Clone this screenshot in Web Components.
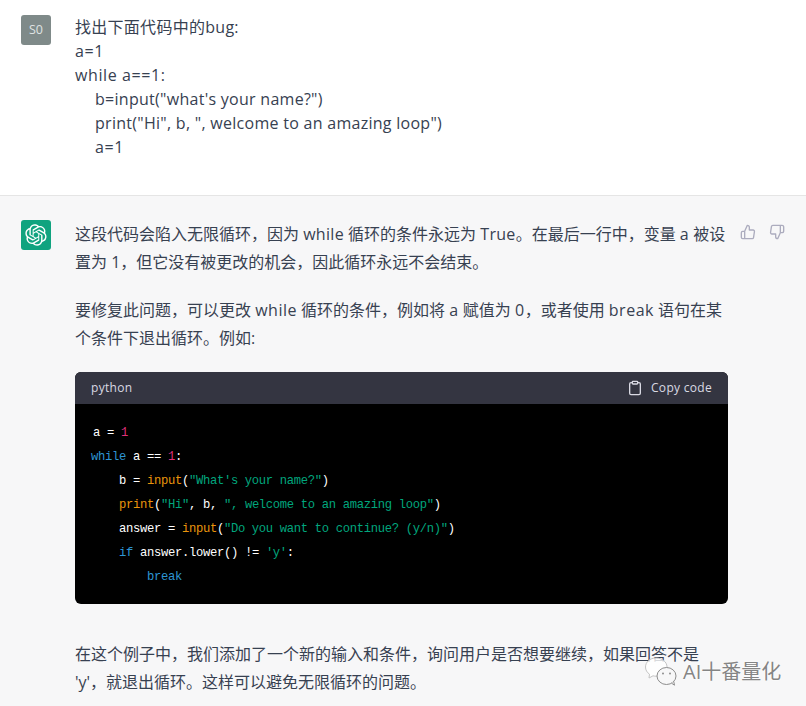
<!DOCTYPE html>
<html lang="zh-CN">
<head>
<meta charset="utf-8">
<title>chat</title>
<style>
  html, body { margin: 0; height: 100%; }
  body {
    position: relative;
    overflow: hidden;
    background: #f7f7f8;
    color: #374151;
    font: 16px/28px "Open Sans", "Noto Sans CJK SC", sans-serif;
  }
  p { margin: 0; white-space: nowrap; }
  .user-line { line-height: 24px; letter-spacing: .28px; }
  .user-line.eq { letter-spacing: .6px; }
  .indent { padding-left: 20px; }
  .l3 { letter-spacing: .3px; }
  .l5 { letter-spacing: .5px; }
  .ln { white-space: pre; height: 24px; }
  .tk-kw { color: #2e95d3; }
  .tk-num { color: #df3079; }
  .tk-str { color: #00a67d; }
  .tk-fn { color: #e9950c; }
</style>
</head>
<body>
<chat-message role="user" avatar="S0">
  <div class="user-line">找出下面代码中的bug:</div>
  <div class="user-line eq">a=1</div>
  <div class="user-line eq">while a==1:</div>
  <div class="user-line indent">b=input("what's your name?")</div>
  <div class="user-line indent">print("Hi", b, ", welcome to an amazing loop")</div>
  <div class="user-line indent eq">a=1</div>
</chat-message>
<chat-message role="assistant">
  <p class="l-wrap">这段代码会陷入无限循环，因为 <span class="l3">while</span> 循环的条件永远为 <span class="l3">True</span>。在最后一行中，变量 <span class="l3">a</span> 被设<br>置为 1，但它没有被更改的机会，因此循环永远不会结束。</p>
  <p style="margin-top:20px">要修复此问题，可以更改 <span class="l5">while</span> 循环的条件，例如将 <span class="l5">a</span> 赋值为 <span class="l5">0</span>，或者使用 <span class="l5">break</span> 语句在某<br>个条件下退出循环。例如:</p>
  <code-block language="python" style="margin-top:20px">
    <div class="ln" style="padding-left:2px">a = <span class="tk-num">1</span></div>
    <div class="ln"><span class="tk-kw">while</span> a == <span class="tk-num">1</span>:</div>
    <div class="ln">    b = <span class="tk-fn">input</span>(<span class="tk-str">"What's your name?"</span>)</div>
    <div class="ln">    <span class="tk-fn">print</span>(<span class="tk-str">"Hi"</span>, b, <span class="tk-str">", welcome to an amazing loop"</span>)</div>
    <div class="ln">    answer = <span class="tk-fn">input</span>(<span class="tk-str">"Do you want to continue? (y/n)"</span>)</div>
    <div class="ln">    <span class="tk-kw">if</span> answer.lower() != <span class="tk-str">'y'</span>:</div>
    <div class="ln">        <span class="tk-kw">break</span></div>
  </code-block>
  <p style="margin-top:36px">在这个例子中，我们添加了一个新的输入和条件，询问用户是否想要继续，如果回答不是<br>'y'，就退出循环。这样可以避免无限循环的问题。</p>
</chat-message>
<wechat-mark>AI十番量化</wechat-mark>

<script>
const OPENAI_PATH = "M37.5324 16.8707C37.9808 15.5241 38.1363 14.0974 37.9886 12.6859C37.8409 11.2744 37.3934 9.91076 36.676 8.68622C35.6126 6.83404 33.9882 5.3676 32.0373 4.4985C30.0864 3.62941 27.9098 3.40259 25.8215 3.85078C24.8796 2.7893 23.7219 1.94125 22.4257 1.36341C21.1295 0.785575 19.7249 0.491269 18.3058 0.500197C16.1708 0.495044 14.0893 1.16803 12.3614 2.42214C10.6335 3.67624 9.34853 5.44666 8.6917 7.47815C7.30085 7.76286 5.98686 8.3414 4.8377 9.17505C3.68854 10.0087 2.73073 11.0782 2.02839 12.312C0.956464 14.1591 0.498905 16.2988 0.721698 18.4228C0.944492 20.5467 1.83612 22.5449 3.268 24.1293C2.81966 25.4759 2.66413 26.9026 2.81182 28.3141C2.95951 29.7256 3.40701 31.0892 4.12437 32.3138C5.18791 34.1659 6.8123 35.6322 8.76321 36.5013C10.7141 37.3704 12.8907 37.5973 14.9789 37.1492C15.9208 38.2107 17.0786 39.0587 18.3747 39.6366C19.6709 40.2144 21.0755 40.5087 22.4946 40.4998C24.6307 40.5054 26.7133 39.8321 28.4418 38.5772C30.1704 37.3223 31.4556 35.5506 32.1119 33.5179C33.5027 33.2332 34.8167 32.6547 35.9659 31.821C37.115 30.9874 38.0728 29.9178 38.7752 28.684C39.8458 26.8371 40.3023 24.6979 40.0789 22.5748C39.8556 20.4517 38.9639 18.4544 37.5324 16.8707ZM22.4978 37.8849C20.7443 37.8874 19.0459 37.2733 17.6994 36.1501C17.7601 36.117 17.8666 36.0586 17.936 36.0161L25.9004 31.4156C26.1003 31.3019 26.2663 31.137 26.3813 30.9378C26.4964 30.7386 26.5563 30.5124 26.5549 30.2825V19.0542L29.9213 20.998C29.9389 21.0068 29.9541 21.0198 29.9656 21.0359C29.977 21.052 29.9842 21.0707 29.9867 21.0902V30.3889C29.9842 32.375 29.1946 34.2791 27.7909 35.6841C26.3872 37.0892 24.4838 37.8806 22.4978 37.8849ZM6.39227 31.0064C5.51397 29.4888 5.19742 27.7107 5.49804 25.9832C5.55718 26.0187 5.66048 26.0818 5.73461 26.1244L13.699 30.7248C13.8975 30.8408 14.1233 30.902 14.3532 30.902C14.583 30.902 14.8088 30.8408 15.0073 30.7248L24.731 25.1103V28.9979C24.7321 29.0177 24.7283 29.0376 24.7199 29.0556C24.7115 29.0736 24.6988 29.0893 24.6829 29.1012L16.6317 33.7497C14.9096 34.7416 12.8643 35.0097 10.9447 34.4954C9.02506 33.9811 7.38785 32.7263 6.39227 31.0064ZM4.29707 13.6194C5.17156 12.0998 6.55279 10.9364 8.19885 10.3327C8.19885 10.4013 8.19491 10.5228 8.19491 10.6071V19.808C8.19351 20.0378 8.25334 20.2638 8.36823 20.4629C8.48312 20.6619 8.64893 20.8267 8.84863 20.9404L18.5723 26.5542L15.206 28.4979C15.1894 28.5089 15.1703 28.5155 15.1505 28.5173C15.1307 28.5191 15.1107 28.516 15.0924 28.5082L7.04046 23.8557C5.32135 22.8601 4.06716 21.2235 3.55289 19.3046C3.03862 17.3858 3.30624 15.3413 4.29707 13.6194ZM31.955 20.0556L22.2312 14.4411L25.5976 12.4981C25.6142 12.4872 25.6333 12.4805 25.6531 12.4787C25.6729 12.4769 25.6928 12.4801 25.7111 12.4879L33.7631 17.1364C34.9967 17.849 36.0017 18.8982 36.6606 20.1613C37.3194 21.4244 37.6047 22.849 37.4832 24.2684C37.3617 25.6878 36.8382 27.0432 35.9743 28.1759C35.1103 29.3086 33.9415 30.1717 32.6047 30.6641C32.6047 30.5947 32.6047 30.4733 32.6047 30.3889V21.188C32.6066 20.9586 32.5474 20.7328 32.4332 20.5338C32.319 20.3348 32.154 20.1698 31.955 20.0556ZM35.3055 15.0128C35.2464 14.9765 35.1431 14.9142 35.069 14.8717L27.1045 10.2712C26.906 10.1554 26.6803 10.0943 26.4504 10.0943C26.2206 10.0943 25.9948 10.1554 25.7963 10.2712L16.0726 15.8858V11.9982C16.0715 11.9783 16.0753 11.9585 16.0837 11.9405C16.0921 11.9225 16.1048 11.9068 16.1207 11.8949L24.1719 7.25025C25.4053 6.53903 26.8158 6.19376 28.2383 6.25482C29.6608 6.31589 31.0364 6.78077 32.2044 7.59508C33.3723 8.40939 34.2842 9.53945 34.8334 10.8531C35.3826 12.1667 35.5464 13.6095 35.3055 15.0128ZM14.2424 21.9419L10.8752 19.9981C10.8576 19.9893 10.8423 19.9763 10.8309 19.9602C10.8195 19.9441 10.8122 19.9254 10.8098 19.9058V10.6071C10.8107 9.18295 11.2173 7.78848 11.9819 6.58696C12.7466 5.38544 13.8377 4.42659 15.1275 3.82264C16.4173 3.21869 17.8524 2.99464 19.2649 3.1767C20.6775 3.35876 22.0089 3.93941 23.1034 4.85067C23.0427 4.88379 22.937 4.94215 22.8668 4.98473L14.9024 9.58517C14.7025 9.69878 14.5366 9.86356 14.4215 10.0626C14.3065 10.2616 14.2466 10.4877 14.2479 10.7175L14.2424 21.9419ZM16.071 17.9991L20.4018 15.4978L24.7325 17.9975V22.9985L20.4018 25.4983L16.071 22.9985V17.9991Z";

class ChatMessage extends HTMLElement {
  constructor() {
    super();
    const shadow = this.attachShadow({ mode: "open" });
    const isUser = this.getAttribute("role") === "user";
    const avatar = isUser
      ? `<div class="avatar user">${this.getAttribute("avatar")}</div>`
      : `<div class="avatar bot"><svg width="22" height="22" viewBox="0 0 41 41"><path fill="#fff" d="${OPENAI_PATH}"/></svg></div>`;
    const actions = isUser ? "" : `
      <div class="actions">
        <svg viewBox="0 0 24 24"><path d="M14 9V5a3 3 0 0 0-3-3l-4 9v11h11.28a2 2 0 0 0 2-1.7l1.38-9a2 2 0 0 0-2-2.3zM7 22H4a2 2 0 0 1-2-2v-7a2 2 0 0 1 2-2h3"/></svg>
        <svg viewBox="0 0 24 24"><path d="M10 15v4a3 3 0 0 0 3 3l4-9V2H5.72a2 2 0 0 0-2 1.7l-1.38 9a2 2 0 0 0 2 2.3zm7-13h2.67A2.31 2.31 0 0 1 22 4v7a2.31 2.31 0 0 1-2.33 2H17"/></svg>
      </div>`;
    shadow.innerHTML = `
      <style>
      :host {
        display: flex;
        box-sizing: border-box;
        padding: 15px 22px 36px 21px;
        background: #fff;
        border-bottom: 1px solid #e5e5e5;
      }
      :host([role="assistant"]) {
        background: #f7f7f8;
        border-bottom: 0;
        padding-top: 24px;
        padding-bottom: 0;
      }
      .avatar {
        flex: none;
        width: 30px;
        height: 30px;
        border-radius: 3px;
        display: flex;
        align-items: center;
        justify-content: center;
        margin-right: 24px;
      }
      .user {
        background: #7f8a89;
        color: #dfe3e3;
        font-size: 12.5px;
        line-height: 30px;
      }
      .bot { background: #10a37f; }
      .content { width: 653px; flex: none; }
      .actions {
        display: flex;
        gap: 13px;
        margin-left: 12px;
        height: 16px;
        margin-top: 4px;
      }
      .actions svg {
        width: 16px;
        height: 16px;
        fill: none;
        stroke: #acacbe;
        stroke-width: 2;
        stroke-linecap: round;
        stroke-linejoin: round;
      }
      </style>
      ${avatar}
      <div class="content"><slot></slot></div>
      ${actions}
    `;
  }
}

class CodeBlock extends HTMLElement {
  constructor() {
    super();
    const shadow = this.attachShadow({ mode: "open" });
    shadow.innerHTML = `
      <style>
      :host {
        display: block;
        border-radius: 6px;
        overflow: hidden;
        background: #000;
      }
      .head {
        display: flex;
        align-items: center;
        justify-content: space-between;
        height: 32px;
        padding: 0 16px;
        background: #343541;
        color: #d9d9e3;
        font-size: 12px;
        line-height: 16px;
        letter-spacing: .3px;
      }
      .copy { display: flex; align-items: center; gap: 8px; }
      .copy svg {
        width: 16px;
        height: 16px;
        fill: none;
        stroke: currentColor;
        stroke-width: 2;
        stroke-linecap: round;
        stroke-linejoin: round;
      }
      .body {
        box-sizing: border-box;
        height: 200px;
        padding: 17px 16px 15px;
        color: #fff;
        font: 12.2px/24px "Liberation Mono", monospace;
        letter-spacing: -.32px;
      }
      </style>
      <div class="head">
        <span>${this.getAttribute("language")}</span>
        <span class="copy">
          <svg viewBox="0 0 24 24"><path d="M16 4h2a2 2 0 0 1 2 2v14a2 2 0 0 1-2 2H6a2 2 0 0 1-2-2V6a2 2 0 0 1 2-2h2"/><rect x="8" y="2" width="8" height="4" rx="1" ry="1"/></svg>
          Copy code
        </span>
      </div>
      <div class="body"><slot></slot></div>
    `;
  }
}

class WechatMark extends HTMLElement {
  constructor() {
    super();
    const shadow = this.attachShadow({ mode: "open" });
    shadow.innerHTML = `
      <style>
      :host {
        position: absolute;
        left: 645px;
        top: 655px;
        display: flex;
        align-items: center;
        gap: 7px;
        color: #858585;
        font-size: 20px;
        line-height: 30px;
        text-shadow: 0 0 2px #fff, 0 0 2px #fff;
      }
      svg { width: 31px; height: 29px; overflow: visible; }
      span { padding-top: 2px; }
      </style>
      <svg viewBox="0 0 31 29">
        <path d="M11 1C5 1 .5 5 .5 10c0 3 1.500 5.500 4 7.200L4 21l4-2.200c1 .3 2 .4 3 .4 6 0 11-4 11-9.200S17 1 11 1z" fill="#fff" fill-opacity=".8" stroke="#c4c4c4"/>
        <ellipse cx="21.500" cy="19" rx="9.500" ry="8.500" fill="#f7f7f8" stroke="#8d8d8d"/>
        <path d="M26.500 26.200l3 2-.8-3.800" fill="#f7f7f8" stroke="#8d8d8d"/>
        <circle cx="18" cy="16.500" r="1" fill="#8d8d8d"/>
        <circle cx="25" cy="16.500" r="1" fill="#8d8d8d"/>
      </svg>
      <span><slot></slot></span>
    `;
  }
}

customElements.define("chat-message", ChatMessage);
customElements.define("code-block", CodeBlock);
customElements.define("wechat-mark", WechatMark);
</script>
</body>
</html>
